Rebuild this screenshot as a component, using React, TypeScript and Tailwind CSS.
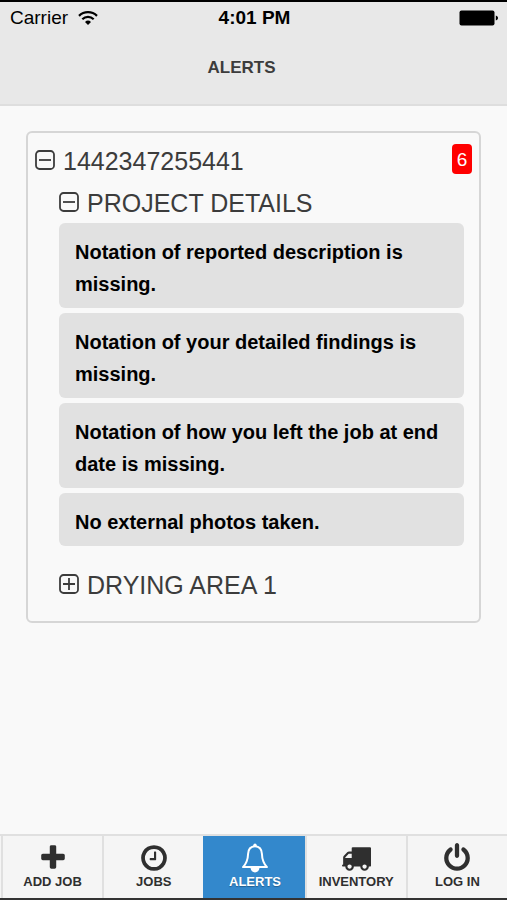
import React, { useState } from 'react';
import { clsx } from 'clsx';

type IconProps = { className?: string };

const PlusIcon: React.FC<IconProps> = ({ className }) => (
  <svg viewBox="0 0 1792 1792" fill="currentColor" className={className} aria-hidden="true">
    <path d="M1600 736v192q0 40-28 68t-68 28h-416v416q0 40-28 68t-68 28h-192q-40 0-68-28t-28-68v-416h-416q-40 0-68-28t-28-68v-192q0-40 28-68t68-28h416v-416q0-40 28-68t68-28h192q40 0 68 28t28 68v416h416q40 0 68 28t28 68z" />
  </svg>
);

const ClockIcon: React.FC<IconProps> = ({ className }) => (
  <svg viewBox="0 0 1792 1792" fill="currentColor" className={className} aria-hidden="true">
    <path d="M1024 544v448q0 14-9 23t-23 9h-320q-14 0-23-9t-9-23v-64q0-14 9-23t23-9h224v-352q0-14 9-23t23-9h64q14 0 23 9t9 23zm416 352q0-148-73-273t-198-198-273-73-273 73-198 198-73 273 73 273 198 198 273 73 273-73 198-198 73-273zm224 0q0 209-103 385.5t-279.5 279.5-385.5 103-385.5-103-279.5-279.5-103-385.5 103-385.5 279.5-279.5 385.5-103 385.5 103 279.5 279.5 103 385.5z" />
  </svg>
);

const BellIcon: React.FC<IconProps> = ({ className }) => (
  <svg viewBox="0 0 30 30" fill="none" className={className} aria-hidden="true">
    <path
      d="M15 3.2c-4.600.3-6.700 3.500-6.900 7.500-.2 5.700-.9 9-5.100 13.400h24c-4.200-4.400-4.900-7.700-5.100-13.400-.2-4-2.300-7.200-6.900-7.500z"
      stroke="currentColor"
      strokeWidth="2"
      strokeLinejoin="round"
    />
    <circle cx="15" cy="2.200" r="1.700" fill="currentColor" />
    <path d="M10.500 25h9c-.3 2.700-2.200 4.400-4.500 4.400s-4.200-1.700-4.500-4.400z" fill="currentColor" />
  </svg>
);

const TruckIcon: React.FC<IconProps> = ({ className }) => (
  <svg viewBox="0 0 1792 1792" fill="currentColor" className={className} aria-hidden="true">
    <path d="M640 1408q0-52-38-90t-90-38-90 38-38 90 38 90 90 38 90-38 38-90zm-384-512h384v-256h-158q-13 0-22 9l-195 195q-9 9-9 22v30zm1280 512q0-52-38-90t-90-38-90 38-38 90 38 90 90 38 90-38 38-90zm256-1088v1024q0 15-4 26.5t-13.5 18.5-16.5 11.5-23.5 6-22.5 2-25.5 0-22.5-.5q0 106-75 181t-181 75-181-75-75-181h-384q0 106-75 181t-181 75-181-75-75-181h-64q-3 0-22.5.5t-25.5 0-22.5-2-23.5-6-16.5-11.5-13.5-18.5-4-26.5q0-26 19-45t45-19v-320q0-8-.5-35t0-38 2.500-34.5 6.500-37 14-30.5 22.500-30l198-198q19-19 50.500-32t58.500-13h160v-192q0-26 19-45t45-19h1024q26 0 45 19t19 45z" />
  </svg>
);

const PowerIcon: React.FC<IconProps> = ({ className }) => (
  <svg viewBox="0 0 1792 1792" fill="currentColor" className={className} aria-hidden="true">
    <path d="M1664 896q0 156-61 298t-164 245-245 164-298 61-298-61-245-164-164-245-61-298q0-182 80.5-343t226.5-270q43-32 95.5-25t83.5 50q32 42 24.5 94.5t-49.5 84.5q-98 74-151.5 181t-53.5 228q0 104 40.5 198.5t109.5 163.5 163.5 109.5 198.5 40.5 198.5-40.5 163.5-109.5 109.5-163.5 40.5-198.5q0-121-53.5-228t-151.5-181q-42-32-49.5-84.5t24.5-94.5q31-43 84-50t95 25q146 109 226.5 270t80.5 343zm-640-768v640q0 52-38 90t-90 38-90-38-38-90v-640q0-52 38-90t90-38 90 38 38 90z" />
  </svg>
);

const WifiIcon: React.FC<IconProps> = ({ className }) => (
  <svg viewBox="0 0 20 16" fill="none" stroke="currentColor" className={className} aria-hidden="true">
    <path d="M1 5.800a13 13 0 0 1 18 0" strokeWidth="2.300" />
    <path d="M4.300 9.200a8.300 8.300 0 0 1 11.400 0" strokeWidth="2.200" />
    <path d="M7 12a4.400 4.400 0 0 1 6 0l-3 3z" fill="currentColor" stroke="none" />
  </svg>
);

const BatteryIcon: React.FC<IconProps> = ({ className }) => (
  <svg viewBox="0 0 40 16" fill="currentColor" className={className} aria-hidden="true">
    <rect x="0.500" y="0.500" width="35" height="15" rx="2" />
    <path d="M36.800 5.500c1.500.4 2.200 1.300 2.200 2.500s-.7 2.100-2.200 2.500z" />
  </svg>
);

const ToggleIcon: React.FC<{ open: boolean }> = ({ open }) => (
  <svg
    viewBox="0 0 20 20"
    fill="none"
    stroke="currentColor"
    strokeWidth="1.800"
    className="w-5 h-5 shrink-0"
    aria-hidden="true"
  >
    <rect x="1" y="1" width="18" height="18" rx="3.500" />
    <path d={open ? 'M4 10h12' : 'M4 10h12M10 4v12'} />
  </svg>
);

type ToggleProps = { label: string; open: boolean; onToggle: () => void };

const Toggle: React.FC<ToggleProps> = ({ label, open, onToggle }) => (
  <button
    type="button"
    aria-expanded={open}
    onClick={onToggle}
    className="flex items-center gap-2 h-[42px] text-[25px] text-[#3c3c3c]"
  >
    <ToggleIcon open={open} />
    <span className="pt-[3px]">{label}</span>
  </button>
);

const alerts = [
  'Notation of reported description is missing.',
  'Notation of your detailed findings is missing.',
  'Notation of how you left the job at end date is missing.',
  'No external photos taken.',
];

const tabs = [
  { href: '#add-job', label: 'ADD JOB', icon: PlusIcon },
  { href: '#jobs', label: 'JOBS', icon: ClockIcon },
  { href: '#alerts', label: 'ALERTS', icon: BellIcon },
  { href: '#inventory', label: 'INVENTORY', icon: TruckIcon },
  { href: '#log-in', label: 'LOG IN', icon: PowerIcon },
];

export default function App() {
  const [jobOpen, setJobOpen] = useState(true);
  const [detailsOpen, setDetailsOpen] = useState(true);
  const [areaOpen, setAreaOpen] = useState(false);
  const active = '#alerts';

  return (
    <div className="min-h-screen flex flex-col bg-[#f9f9f9] border-t-2 border-b-2 border-t-black border-b-[#333] font-['Liberation_Sans',Arial,sans-serif]">
      <header className="bg-[#e8e8e8] border-b-2 border-[#dedede]">
        <div className="grid grid-cols-3 items-center h-8 pl-[10px] pr-2 text-[19px] text-black">
          <div className="flex items-center gap-[10px]">
            <span>Carrier</span>
            <WifiIcon className="w-5 h-4" />
          </div>
          <span className="text-center font-bold">4:01 PM</span>
          <BatteryIcon className="w-10 h-4 justify-self-end" />
        </div>
        <h1 className="h-[70px] pt-[22px] pr-6 text-center text-[17px] leading-6 font-bold text-[#3c3c3c]">ALERTS</h1>
      </header>

      <main className="flex-1 px-[26px] py-[25px]">
        <section className="border-2 border-[#d6d6d6] rounded-md pt-[6px] pb-4 pl-[7px] pr-[7px]">
          <div className="flex items-center justify-between">
            <Toggle label="1442347255441" open={jobOpen} onToggle={() => setJobOpen(!jobOpen)} />
            <span className="w-5 h-[30px] -mt-[2px] rounded bg-[#ff0000] text-white text-[19px] leading-[32px] text-center">
              6
            </span>
          </div>

          {jobOpen && (
            <div className="pl-6 pr-2">
              <Toggle label="PROJECT DETAILS" open={detailsOpen} onToggle={() => setDetailsOpen(!detailsOpen)} />
              {detailsOpen && (
                <ul className="flex flex-col gap-[5px] mb-[17px]">
                  {alerts.map((alert) => (
                    <li
                      key={alert}
                      className="px-4 pt-[13px] pb-2 rounded-md bg-[#e1e1e1] text-black text-[20px] leading-8 font-bold"
                    >
                      {alert}
                    </li>
                  ))}
                </ul>
              )}
              <Toggle label="DRYING AREA 1" open={areaOpen} onToggle={() => setAreaOpen(!areaOpen)} />
            </div>
          )}
        </section>
      </main>

      <nav className="flex pl-px bg-[#f5f5f5] border-t-2 border-[#e0e0e0]">
        {tabs.map(({ href, label, icon: Icon }) => (
          <a
            key={href}
            href={href}
            className={clsx(
              'flex-1 basis-0 min-w-0 flex flex-col items-center gap-px pt-[7px] pb-2 border-l-2',
              href === active
                ? 'bg-[#3388cc] border-[#3388cc] text-white [text-shadow:0_1px_1px_#225f90]'
                : 'border-[#e0e0e0] text-[#2f2f2f]'
            )}
          >
            <Icon className="w-[30px] h-[30px]" />
            <span className="text-[13px] leading-4 font-bold">{label}</span>
          </a>
        ))}
      </nav>
    </div>
  );
}
